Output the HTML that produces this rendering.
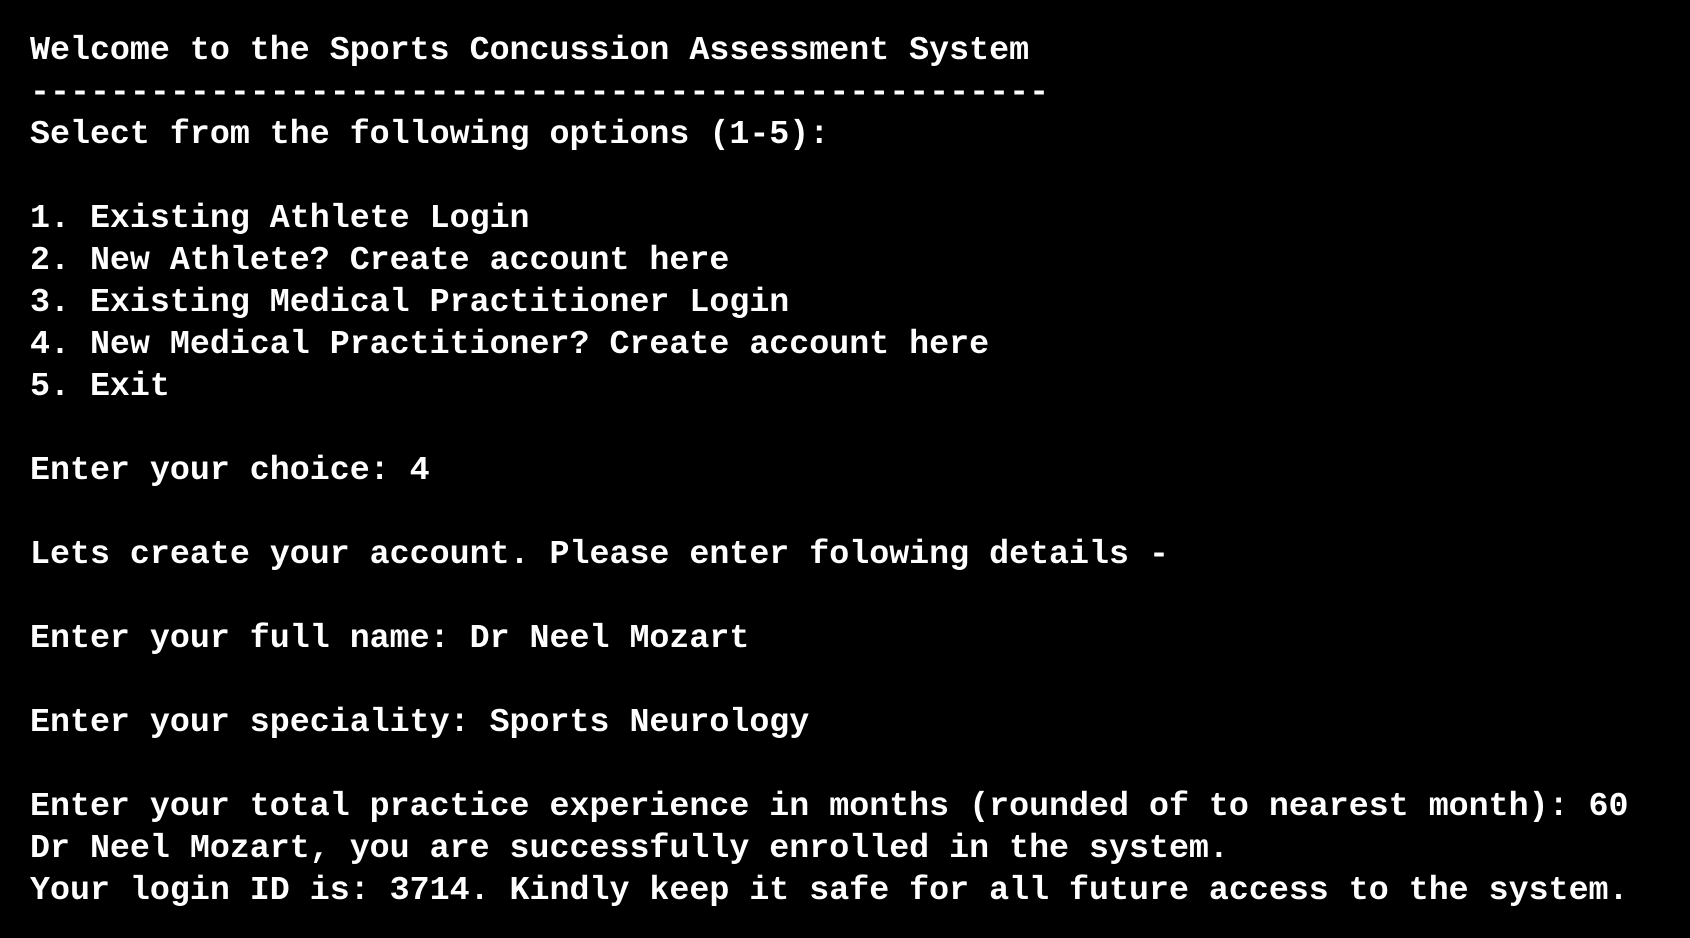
<!DOCTYPE html>
<html><head><meta charset="utf-8"><style>
html,body{margin:0;padding:0;background:#000;width:1690px;height:938px;overflow:hidden}
pre{margin:0;position:absolute;left:30px;top:29px;color:#fff;font-family:"Liberation Mono",monospace;font-weight:bold;font-size:33.3px;line-height:42px;white-space:pre}
</style></head><body><pre>Welcome to the Sports Concussion Assessment System
---------------------------------------------------
Select from the following options (1-5):

1. Existing Athlete Login
2. New Athlete? Create account here
3. Existing Medical Practitioner Login
4. New Medical Practitioner? Create account here
5. Exit

Enter your choice: 4

Lets create your account. Please enter folowing details -

Enter your full name: Dr Neel Mozart

Enter your speciality: Sports Neurology

Enter your total practice experience in months (rounded of to nearest month): 60
Dr Neel Mozart, you are successfully enrolled in the system.
Your login ID is: 3714. Kindly keep it safe for all future access to the system.</pre></body></html>
